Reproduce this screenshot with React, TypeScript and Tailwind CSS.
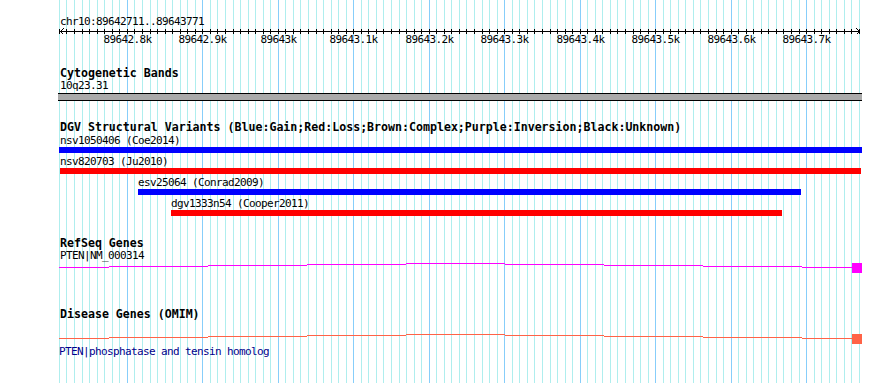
import React from 'react';

const START = 89642711;
const SCALE = 800 / 1060;
const px = (bp: number) => Math.round(60 + (bp - START) * SCALE - 0.3);

// grid/tick positions every 10 bp
const ticks: { x: number; major: boolean }[] = [];
for (let bp = 89642710; bp <= 89643770; bp += 10) {
  ticks.push({ x: px(bp), major: bp % 100 === 0 });
}

const majorLabels = [
  { bp: 89642800, label: '89642.8k' },
  { bp: 89642900, label: '89642.9k' },
  { bp: 89643000, label: '89643k' },
  { bp: 89643100, label: '89643.1k' },
  { bp: 89643200, label: '89643.2k' },
  { bp: 89643300, label: '89643.3k' },
  { bp: 89643400, label: '89643.4k' },
  { bp: 89643500, label: '89643.5k' },
  { bp: 89643600, label: '89643.6k' },
  { bp: 89643700, label: '89643.7k' },
];

// intron "hat" drawn as 1px steps
const stepX = [59, 109, 208, 307, 406, 505, 604, 703, 802, 852];
const stepDy = [4, 3, 2, 1, 0, 1, 2, 3, 4];

function Grid() {
  return (
    <svg className="absolute inset-0" width={890} height={383} shapeRendering="crispEdges">
      {ticks.map((t, i) => (
        <rect key={i} x={t.x} y={0} width={1} height={383} fill={t.major ? '#87cefa' : '#afeeee'} />
      ))}
    </svg>
  );
}

function Ruler() {
  return (
    <svg className="block" width={890} height={6} shapeRendering="crispEdges">
      <rect x={60} y={3} width={800} height={1} fill="#000" />
      {ticks.map((t, i) => (
        <rect key={i} x={t.x} y={1} width={1} height={5} fill="#000" />
      ))}
      <path d="M60.5 3.5 L63.5 0.5 M60.5 3.5 L63.5 6.5" stroke="#000" strokeWidth={1} fill="none" />
      <path d="M859.5 3.5 L856.5 0.5 M859.5 3.5 L856.5 6.5" stroke="#000" strokeWidth={1} fill="none" />
    </svg>
  );
}

function GeneModel({ color, base }: { color: string; base: number }) {
  return (
    <svg className="block" width={890} height={12} shapeRendering="crispEdges">
      {stepDy.map((dy, i) => (
        <rect key={i} x={stepX[i]} y={base + dy} width={stepX[i + 1] - stepX[i]} height={1} fill={color} />
      ))}
      <rect x={852} y={base} width={10} height={10} fill={color} />
    </svg>
  );
}

const mono = "font-['DejaVu_Sans_Mono','Liberation_Mono',monospace]";
const small = 'h-[12px] text-[11px] leading-[12px] tracking-[-0.62px] whitespace-pre';
const bold = 'h-[14px] pt-[1px] text-[11.6px] leading-[13px] font-bold whitespace-pre';

export default function App() {
  return (
    <div className={`relative w-[890px] h-[383px] overflow-hidden bg-white text-black ${mono}`}>
      <Grid />
      <div className="relative flex flex-col pt-[16px]">
        <div className={`${small} pl-[60px]`}>chr10:89642711..89643771</div>
        <Ruler />
        <div className={`relative ${small}`}>
          {majorLabels.map((m) => (
            <span
              key={m.label}
              className="absolute top-0 -translate-x-1/2"
              style={{ left: px(m.bp) + 0.5 }}
            >
              {m.label}
            </span>
          ))}
        </div>

        {/* Cytogenetic Bands */}
        <div className={`mt-[20px] ${bold} pl-[60px]`}>Cytogenetic Bands</div>
        <div className={`${small} pl-[60px]`}>10q23.31</div>
        <div className="mt-[1px] ml-[58px] w-[804px] h-[8px] bg-[#aaaaaa] border-y border-black" />

        {/* DGV */}
        <div className={`mt-[19px] ${bold} pl-[60px]`}>
          DGV Structural Variants (Blue:Gain;Red:Loss;Brown:Complex;Purple:Inversion;Black:Unknown)
        </div>
        <div className={`mt-[1px] ${small} pl-[60px]`}>nsv1050406 (Coe2014)</div>
        <div className="ml-[59px] w-[803px] h-[6px] bg-[#0000ff]" />
        <div className={`mt-[3px] ${small} pl-[60px]`}>nsv820703 (Ju2010)</div>
        <div className="ml-[60px] w-[801px] h-[6px] bg-[#ff0000]" />
        <div className={`mt-[3px] ${small} pl-[138px]`}>esv25064 (Conrad2009)</div>
        <div className="ml-[138px] w-[663px] h-[6px] bg-[#0000ff]" />
        <div className={`mt-[3px] ${small} pl-[171px]`}>dgv1333n54 (Cooper2011)</div>
        <div className="ml-[171px] w-[611px] h-[6px] bg-[#ff0000]" />

        {/* RefSeq */}
        <div className={`mt-[20px] ${bold} pl-[60px]`}>RefSeq Genes</div>
        <div className={`${small} pl-[60px]`}>PTEN|NM_000314</div>
        <GeneModel color="#ff00ff" base={1} />

        {/* OMIM */}
        <div className={`mt-[33px] ${bold} pl-[60px]`}>Disease Genes (OMIM)</div>
        <div className="mt-[12px]">
          <GeneModel color="#ff6347" base={1} />
        </div>
        <div className={`mt-[1px] ${small} pl-[59px] text-[#00008b]`}>
          PTEN|phosphatase and tensin homolog
        </div>
      </div>
    </div>
  );
}
